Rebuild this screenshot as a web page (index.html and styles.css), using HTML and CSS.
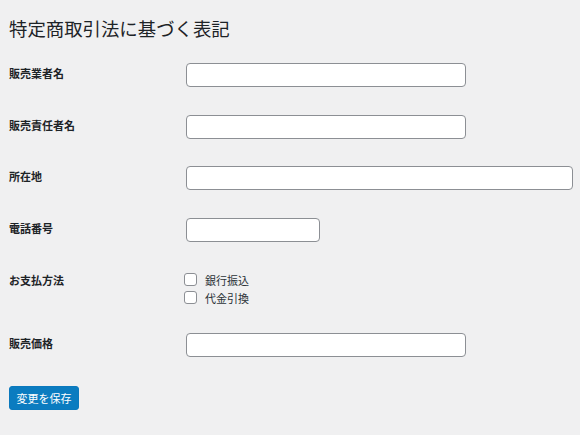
FILE: index.html
```html
<!DOCTYPE html>
<html lang="ja">
<head>
<meta charset="utf-8">
<link rel="stylesheet" href="styles.css">
</head>
<body>
<div class="wrap">
  <h1 class="title">特定商取引法に基づく表記</h1>
  <form class="form">
    <div class="row">
      <div class="label">販売業者名</div>
      <div class="field"><input class="input regular" type="text"></div>
    </div>
    <div class="row">
      <div class="label">販売責任者名</div>
      <div class="field"><input class="input regular" type="text"></div>
    </div>
    <div class="row">
      <div class="label">所在地</div>
      <div class="field"><input class="input large" type="text"></div>
    </div>
    <div class="row">
      <div class="label">電話番号</div>
      <div class="field"><input class="input small" type="text"></div>
    </div>
    <div class="row row-checks">
      <div class="label">お支払方法</div>
      <div class="field checks">
        <label class="check"><span class="box"></span>銀行振込</label>
        <label class="check"><span class="box"></span>代金引換</label>
      </div>
    </div>
    <div class="row">
      <div class="label">販売価格</div>
      <div class="field"><input class="input regular" type="text"></div>
    </div>
    <div class="submit">
      <button class="button" type="button">変更を保存</button>
    </div>
  </form>
</div>
</body>
</html>
```

FILE: styles.css
```css
html, body {
  margin: 0;
  padding: 0;
  background: #f0f0f1;
  font-family: "Noto Sans CJK JP", "Noto Sans", sans-serif;
  color: #1d2327;
}
.wrap {
  padding: 15px 0 0 9px;
}
.title {
  margin: 0;
  font-size: 18.4px;
  font-weight: 400;
  line-height: 26px;
  color: #1d2327;
}
.form {
  margin-top: 8px;
}
.row {
  display: flex;
  padding: 14px 0 13.7px;
}
.label {
  width: 177px;
  flex: none;
  font-size: 11px;
  font-weight: 700;
  line-height: 20px;
  color: #1d2327;
}
.field {
  display: flex;
}
.input {
  box-sizing: border-box;
  height: 24px;
  margin: 0;
  padding: 0 6px;
  border: 1px solid #8c8f94;
  border-radius: 4px;
  background: #fff;
  font-family: inherit;
  font-size: 11px;
}
.regular { width: 280px; }
.large { width: 387px; }
.small { width: 134px; }
.checks {
  flex-direction: column;
  padding-top: 1px;
}
.check {
  display: flex;
  align-items: center;
  height: 18px;
  margin-left: -2px;
  font-size: 11px;
  line-height: 18px;
  color: #2c3338;
}
.box {
  box-sizing: border-box;
  width: 13px;
  height: 13px;
  border: 1px solid #8c8f94;
  border-radius: 3px;
  background: #fff;
  margin-right: 8px;
}
.row-checks {
  padding-bottom: 12px;
}
.submit {
  padding-top: 14px;
}
.button {
  box-sizing: border-box;
  width: 70px;
  height: 24px;
  margin: 0;
  padding: 0;
  border: 1px solid #0b79bd;
  border-radius: 3px;
  background: #0b7cc0;
  color: #fff;
  font-family: inherit;
  font-size: 11px;
  line-height: 22px;
}
```
